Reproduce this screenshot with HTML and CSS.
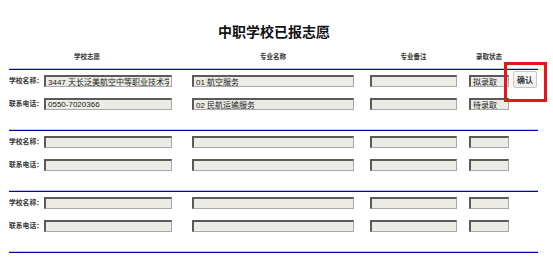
FILE: index.html
```html
<!DOCTYPE html>
<html lang="zh">
<head>
<meta charset="utf-8">
<title>中职学校已报志愿</title>
<link rel="stylesheet" href="styles.css">
</head>
<body>
<main class="page">
  <h1 class="title">中职学校已报志愿</h1>
  <div class="table">
    <div class="row head">
      <span class="h h-school">学校志愿</span>
      <span class="h h-major">专业名称</span>
      <span class="h h-note">专业备注</span>
      <span class="h h-status">录取状态</span>
    </div>

    <div class="group">
      <div class="row">
        <span class="label">学校名称：</span>
        <input class="field f-school" value="3447 天长泛美航空中等职业技术学校" readonly>
        <input class="field f-major" value="01 航空服务" readonly>
        <input class="field f-note" value="" readonly>
        <input class="field f-status" value="拟录取" readonly>
        <button class="btn" type="button">确认</button>
      </div>
      <div class="row">
        <span class="label">联系电话：</span>
        <input class="field f-school" value="0550-7020366" readonly>
        <input class="field f-major" value="02 民航运输服务" readonly>
        <input class="field f-note" value="" readonly>
        <input class="field f-status" value="待录取" readonly>
      </div>
    </div>

    <div class="group">
      <div class="row">
        <span class="label">学校名称：</span>
        <input class="field f-school" readonly>
        <input class="field f-major" readonly>
        <input class="field f-note" readonly>
        <input class="field f-status" readonly>
      </div>
      <div class="row">
        <span class="label">联系电话：</span>
        <input class="field f-school" readonly>
        <input class="field f-major" readonly>
        <input class="field f-note" readonly>
        <input class="field f-status" readonly>
      </div>
    </div>

    <div class="group">
      <div class="row">
        <span class="label">学校名称：</span>
        <input class="field f-school" readonly>
        <input class="field f-major" readonly>
        <input class="field f-note" readonly>
        <input class="field f-status" readonly>
      </div>
      <div class="row">
        <span class="label">联系电话：</span>
        <input class="field f-school" readonly>
        <input class="field f-major" readonly>
        <input class="field f-note" readonly>
        <input class="field f-status" readonly>
      </div>
    </div>

    <div class="group end"></div>
  </div>
  <div class="highlight"></div>
</main>
</body>
</html>
```

FILE: styles.css
```css
html, body {
  margin: 0;
  padding: 0;
  background: #ffffff;
}

body {
  font-family: "Liberation Sans", "Noto Sans CJK SC", sans-serif;
  color: #222;
}

.page {
  position: relative;
  width: 553px;
  height: 271px;
  overflow: hidden;
}

.title {
  margin: 24px 0 0 0;
  height: 16px;
  line-height: 16px;
  font-size: 14px;
  font-weight: bold;
  text-align: center;
  color: #111;
  padding-right: 5px;
}

.table {
  margin-left: 9px;
  width: 529px;
}

.row {
  display: grid;
  grid-template-columns: 35px 148px 178px 99px 44px 24px;
  align-items: center;
  height: 12px;
}

.head {
  margin-top: 13px;
  height: 8px;
  margin-bottom: 8px;
}

.h {
  font-size: 6.5px;
  line-height: 8px;
  font-weight: bold;
  color: #333;
  text-align: center;
}

.h-school {
  grid-column: 1 / 3;
  width: 156px;
}

.h-major { width: 162px; }
.h-note { width: 87px; }
.h-status { width: 40px; }

.group {
  border-top: 1px solid #0000a8;
  box-shadow: 0 -1px 0 #c4c4ee;
  padding: 5px 0 20px 0;
  display: flex;
  flex-direction: column;
  gap: 11px;
}

.group.end {
  padding: 0;
  height: 0;
}

.label {
  font-size: 6.8px;
  line-height: 12px;
  font-weight: bold;
  color: #333;
  white-space: nowrap;
}

.field {
  box-sizing: border-box;
  height: 12px;
  margin: 0;
  padding: 0 2px;
  border: 2px solid;
  border-color: #5a5a5a #a8a8a8 #a8a8a8 #5a5a5a;
  border-width: 2px 1px 1px 2px;
  background: #ecebe5;
  font-family: "Liberation Sans", "Noto Sans CJK SC", sans-serif;
  font-size: 8px;
  line-height: 9px;
  color: #222;
  outline: none;
}

.f-school { width: 128px; }
.f-major { width: 162px; }
.f-note { width: 87px; }
.f-status { width: 40px; }

.btn {
  box-sizing: border-box;
  width: 24px;
  height: 17px;
  margin: -4px 0 -1px 0;
  padding: 0;
  border: 1px solid #c8c8c8;
  border-radius: 2px;
  background: linear-gradient(#fafafa, #ececec);
  font-family: "Liberation Sans", "Noto Sans CJK SC", sans-serif;
  font-size: 8px;
  font-weight: bold;
  color: #333;
}

.highlight {
  position: absolute;
  left: 504px;
  top: 62px;
  width: 43px;
  height: 40px;
  box-sizing: border-box;
  border: 3px solid #e3161e;
}
```
